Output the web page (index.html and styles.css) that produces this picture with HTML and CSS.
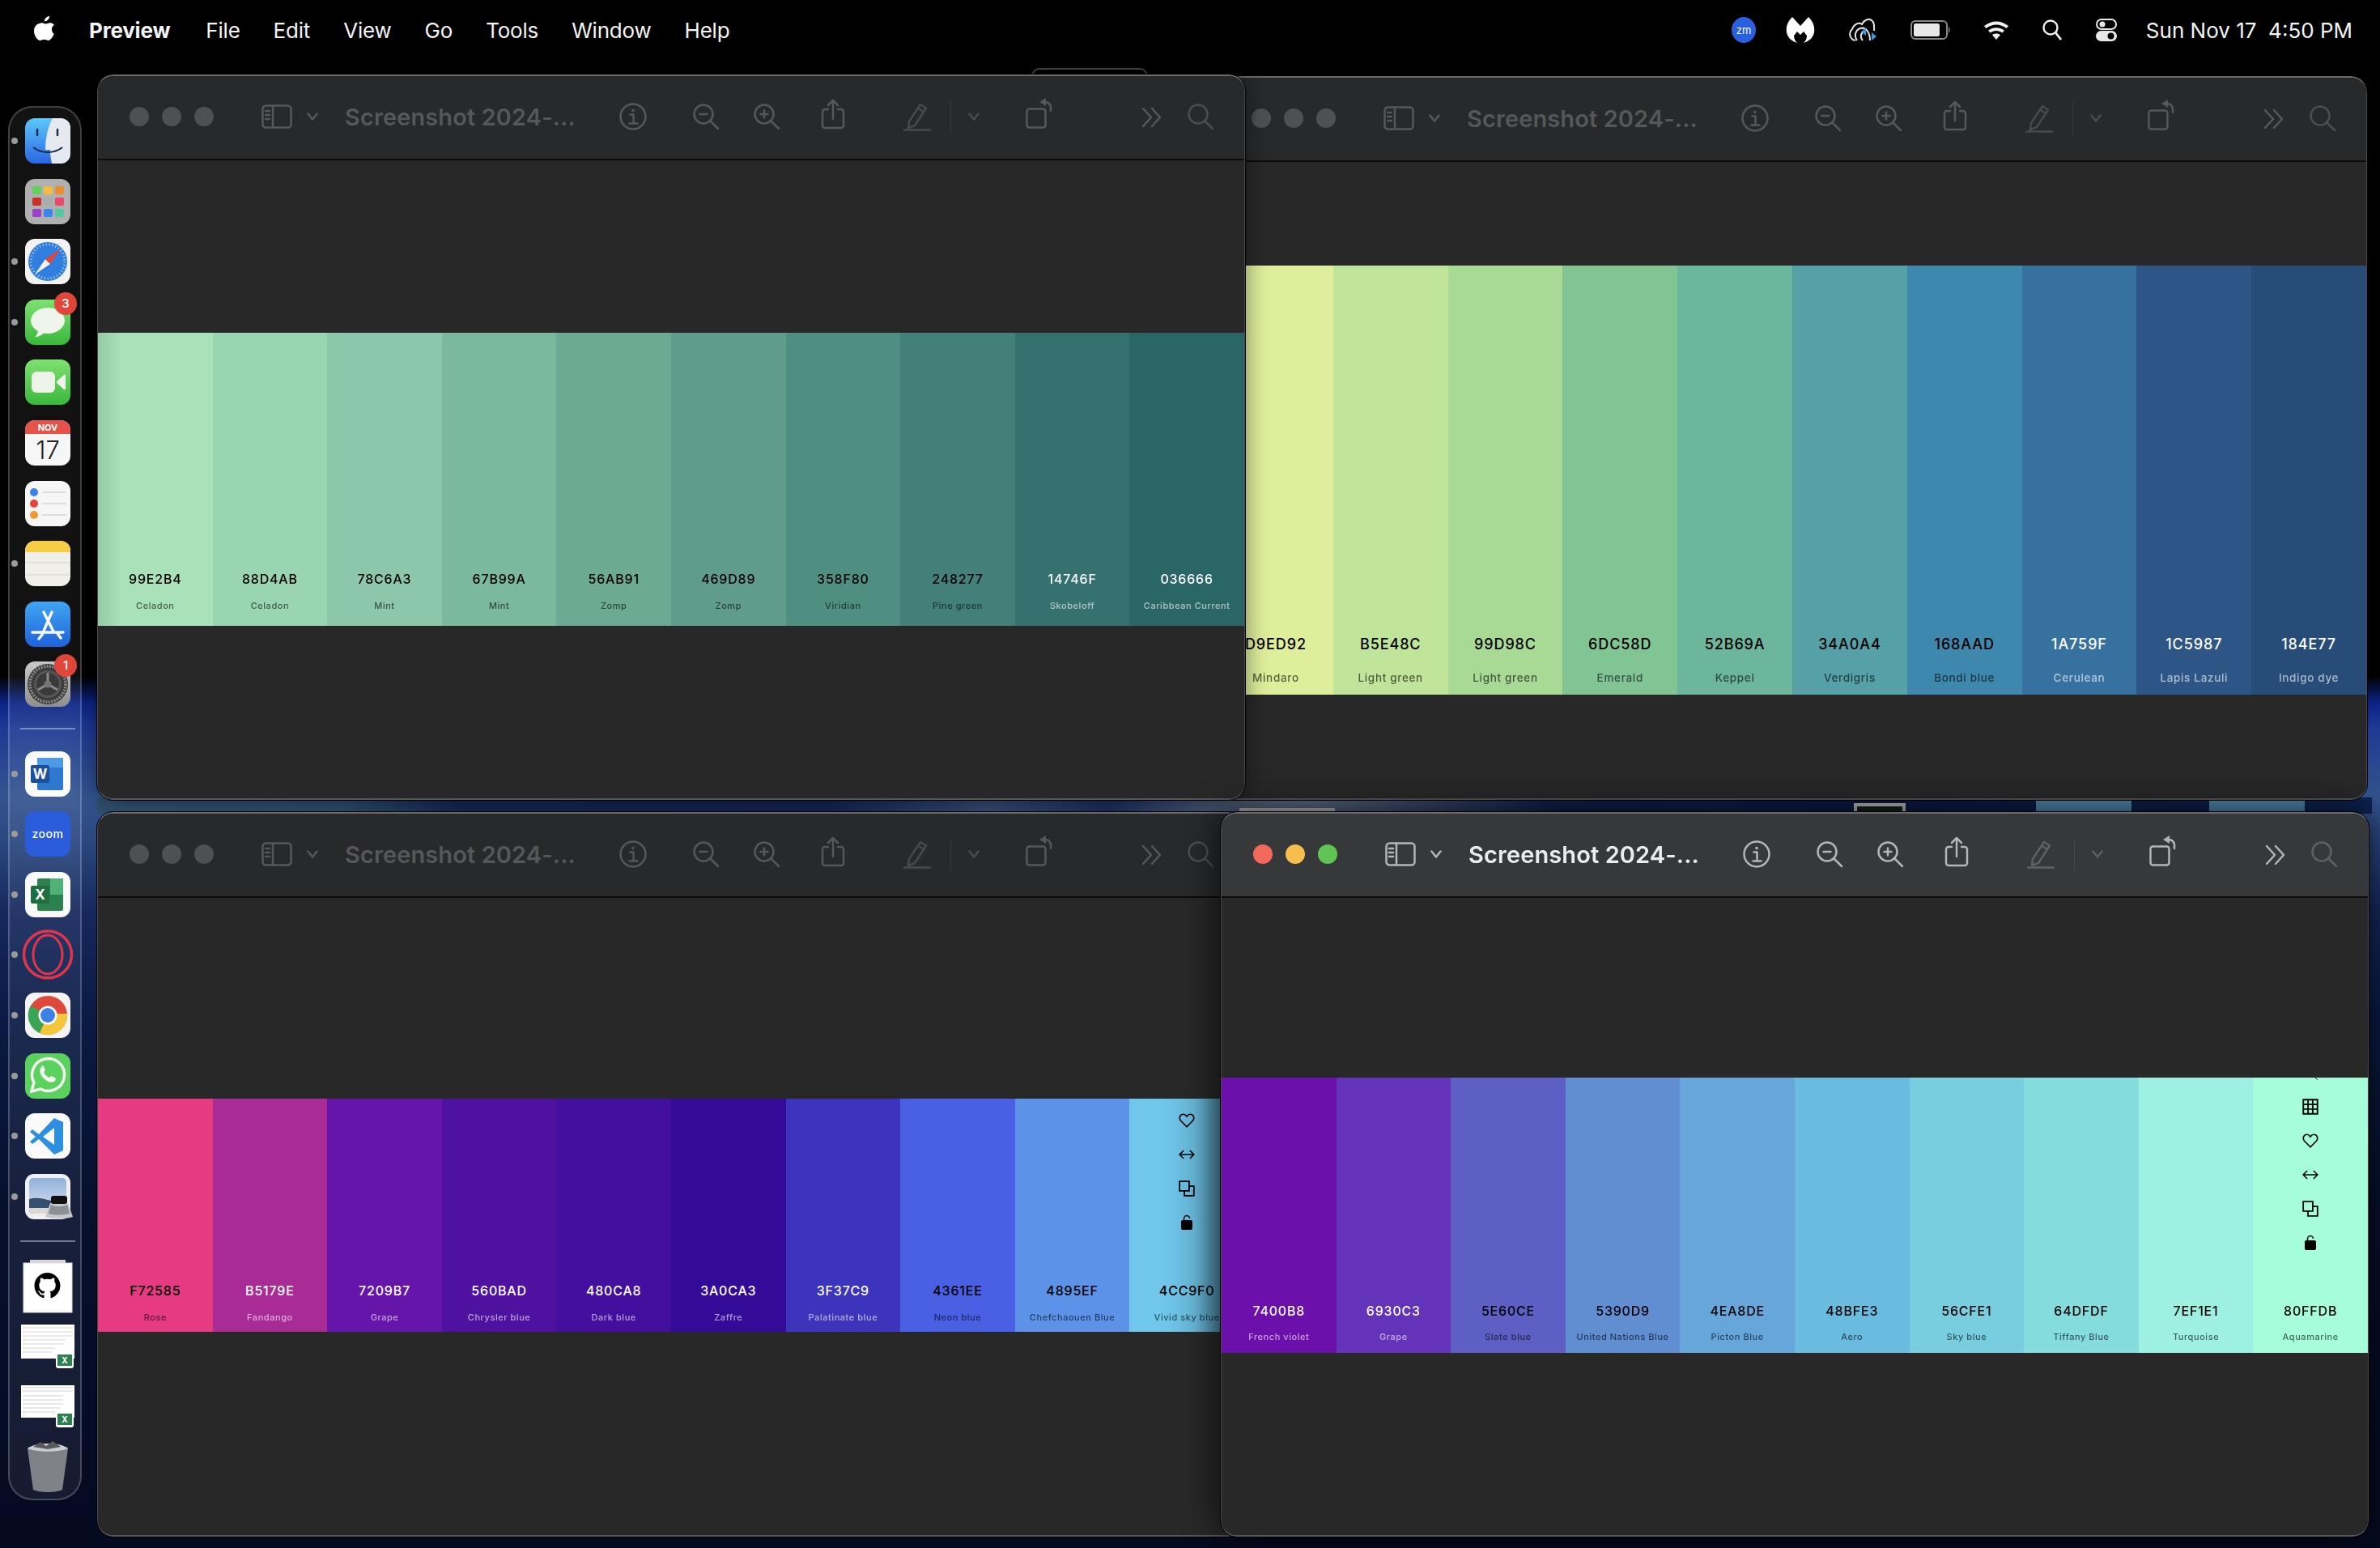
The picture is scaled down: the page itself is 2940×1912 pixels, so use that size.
FILE: index.html
```html
<!DOCTYPE html>
<html lang="en">
<head>
  <meta charset="UTF-8">
  <title>Preview - palettes</title>
  <link rel="stylesheet" href="styles.css">
</head>
<body>
  <!-- toolbar glyphs, shared by the four windows -->
  <svg class="defs" width="0" height="0">
    <symbol id="i-sidebar" viewBox="0 0 38 30"><rect x="1.5" y="1.5" width="35" height="27" rx="4"/><path d="M14 2v26M5 8h5M5 13h5M5 18h5"/></symbol>
    <symbol id="i-chev" viewBox="0 0 14 10"><path d="M1.5 1.5 7 8.5l5.500-7"/></symbol>
    <symbol id="i-info" viewBox="0 0 34 34"><circle cx="17" cy="17" r="15.500"/><path d="M13.500 14.500H17.500V25M12.500 25.500h10"/><circle class="fill" cx="17" cy="9.500" r="1.800"/></symbol>
    <symbol id="i-zoomout" viewBox="0 0 33 33"><circle cx="13" cy="13" r="11.500"/><path d="M21 21l10 10M8.500 13h9"/></symbol>
    <symbol id="i-zoomin" viewBox="0 0 33 33"><circle cx="13" cy="13" r="11.500"/><path d="M21 21l10 10M8.500 13h9M13 8.500v9"/></symbol>
    <symbol id="i-share" viewBox="0 0 30 38"><path d="M9 13H5a3 3 0 0 0-3 3v17a3 3 0 0 0 3 3h20a3 3 0 0 0 3-3V16a3 3 0 0 0-3-3h-4M15 25V2M9 8l6-6 6 6"/></symbol>
    <symbol id="i-pen" viewBox="0 0 34 36"><path d="M7 24 21 3l7 4.500L14 29l-8 3zM18 7.500l7 4.500M1 34.500h32"/></symbol>
    <symbol id="i-rotate" viewBox="0 0 34 38"><rect x="1.500" y="13.500" width="23" height="23" rx="3"/><path d="M24 5c4 0 7 3 7 7v4"/><path class="fill" d="M25 0l-8 5 8 5z"/></symbol>
    <symbol id="i-dchev" viewBox="0 0 24 24"><path d="M1 1l10 11L1 23M12 1l10 11-10 11"/></symbol>
    <symbol id="i-search" viewBox="0 0 33 33"><circle cx="13" cy="13" r="11.500"/><path d="M21 21l10 10"/></symbol>
    <symbol id="i-grid" viewBox="0 0 16 16"><path d="M1 1h14v14H1zM1 5.700h14M1 10.300h14M5.700 1v14M10.300 1v14"/></symbol>
    <symbol id="i-heart" viewBox="0 0 18 16"><path d="M9 15 2.500 8.500C-.5 5 2 1 5 1c2 0 3 1 4 2.500C10 2 11 1 13 1c3 0 5.500 4 2.500 7.500z"/></symbol>
    <symbol id="i-arrows" viewBox="0 0 18 12"><path d="M1 6h16M5.500 1.500 1 6l4.500 4.500M12.500 1.500 17 6l-4.500 4.500"/></symbol>
    <symbol id="i-copy" viewBox="0 0 17 17"><path d="M1 1h10v10H1zM11 6h5v10H6v-5"/></symbol>
    <symbol id="i-lock" viewBox="0 0 16 20"><path d="M4.500 7V5a3.500 3.500 0 0 1 7 0"/><rect class="fill" x="1" y="7" width="14" height="12" rx="2"/></symbol>
  </svg>

  <div class="desktop">
    <header class="menubar">
      <svg class="apple" viewBox="0 0 28 32"><path d="M20 1c.300 3-2.600 6.500-6 6.300C13.600 4 17 1.200 20 1zM23 17c0-3.300 2.700-4.900 3-5-1.700-2.400-4.200-2.800-5.100-2.800-2.200-.200-4.200 1.300-5.300 1.300s-2.800-1.300-4.600-1.300C6 9.300 1 12.500 1 19.500 1 25 5.300 31 8.500 31c1.700 0 2.900-1.200 5.100-1.200s3.200 1.200 5.100 1.200c3.100 0 6-5.300 7-8.200-.100 0-2.700-1.600-2.700-5.800z"/></svg>
      <nav class="menu">
        <span class="app-name">Preview</span>
        <span>File</span><span>Edit</span><span>View</span><span>Go</span><span>Tools</span><span>Window</span><span>Help</span>
      </nav>
      <div class="status">
        <svg class="st-zoom" viewBox="0 0 30 32"><ellipse cx="15" cy="16" rx="15" ry="16" fill="#2a5fe0"/><text x="15" y="21" text-anchor="middle" font-size="13" fill="#fff">zm</text></svg>
        <svg class="st-mb" viewBox="0 0 36 34"><path fill="#fff" d="M8 1C2 7 0 13 1 20c1 6 6 11 13 13-3-3-4-6-4-9l4-5 4 4 4-4 4 5c0 3-1 6-4 9 7-2 12-7 13-13 1-7-1-13-7-19l-10 11z"/></svg>
        <svg class="st-cc" viewBox="0 0 44 34"><g fill="none" stroke="#e6e6e6" stroke-width="2"><path d="M10 30a8 8 0 0 1-4-14c2-6 8-9 12-6 3-6 10-8 13-4 3 3 2 8 2 12M12 30c-4-6-2-13 4-15 7-2 12 5 12 15M19 30c-4-5-2-10 2-11"/></g><path fill="#3a9bd8" d="M23 14l-6 5 6 5zm7 6l6 5-6 5z"/></svg>
        <svg class="st-batt" viewBox="0 0 50 24"><rect x="1" y="1" width="44" height="22" rx="5" fill="none" stroke="#888" stroke-width="2"/><rect x="4" y="4" width="32" height="16" rx="2.500" fill="#e8e8e8"/><path fill="#888" d="M47 8c2 1 2 7 0 8z"/></svg>
        <svg class="st-wifi" viewBox="0 0 34 24"><path fill="#f0f0f0" d="M17 24l-5-6c3-2 7-2 10 0zM9.500 15.500 7 12.500c6-4.500 14-4.500 20 0l-2.500 3c-4.500-3.500-10.500-3.500-15 0zM4.500 10 2 7c9-7.500 21-7.500 30 0l-2.500 3C22 4 12 4 4.500 10z"/></svg>
        <svg class="st-search" viewBox="0 0 26 26"><circle cx="11" cy="10" r="8.500" fill="none" stroke="#f0f0f0" stroke-width="2.400"/><path d="M17 16l7 9" stroke="#f0f0f0" stroke-width="2.800"/></svg>
        <svg class="st-cc2" viewBox="0 0 26 28"><rect x="1" y="1" width="24" height="12" rx="6" fill="none" stroke="#e8e8e8" stroke-width="2"/><circle cx="8" cy="7" r="3.500" fill="#e8e8e8"/><rect y="15" width="26" height="13" rx="6.500" fill="#e8e8e8"/><circle cx="18.500" cy="21.500" r="4" fill="#000"/></svg>
        <span class="clock">Sun Nov 17&nbsp; 4:50 PM</span>
      </div>
    </header>

    <aside class="dock">
      <div class="dock-icon running">
        <svg viewBox="0 0 56 56"><defs><linearGradient id="fb" x1="0" y1="0" x2="0" y2="1"><stop offset="0" stop-color="#5cc8fa"/><stop offset="1" stop-color="#2a66e6"/></linearGradient></defs><rect width="56" height="56" rx="12" fill="url(#fb)"/><path d="M34 0h10a12 12 0 0 1 12 12v32a12 12 0 0 1-12 12H33c-1-5-2-11-2-17h-6c0-14 3-28 9-39z" fill="#e6eaf0"/><path d="M15 14v7M40 14v7" stroke="#1a2c46" stroke-width="2.500" stroke-linecap="round"/><path d="M10 36c10 8 26 8 36 0" fill="none" stroke="#1a2c46" stroke-width="2"/></svg>
      </div>
      <div class="dock-icon">
        <svg viewBox="0 0 56 56"><rect width="56" height="56" rx="12" fill="#b0b0b0"/><g><rect x="9" y="9" width="11" height="10" rx="2" fill="#62d05a"/><rect x="23" y="9" width="11" height="10" rx="2" fill="#f6bd3a"/><rect x="37" y="9" width="11" height="10" rx="2" fill="#ec8c30"/><rect x="9" y="23" width="11" height="10" rx="2" fill="#c9302a"/><rect x="23" y="23" width="11" height="10" rx="2" fill="#a9adb0"/><rect x="37" y="23" width="11" height="10" rx="2" fill="#e8486a"/><rect x="9" y="37" width="11" height="10" rx="2" fill="#9a40cc"/><rect x="23" y="37" width="11" height="10" rx="2" fill="#3a86f0"/><rect x="37" y="37" width="11" height="10" rx="2" fill="#52c8a0"/></g></svg>
      </div>
      <div class="dock-icon running">
        <svg viewBox="0 0 56 56"><rect width="56" height="56" rx="12" fill="#f2f2f2"/><circle cx="28" cy="28" r="24" fill="#2f7ee0"/><circle cx="28" cy="28" r="21" fill="none" stroke="#bcd8f6" stroke-width="3" stroke-dasharray="1 3"/><path d="M12 44 25 25l6 6z" fill="#f4f4f4"/><path d="M44 12 25 25l6 6z" fill="#e0453a"/></svg>
      </div>
      <div class="dock-icon running">
        <svg viewBox="0 0 56 56"><defs><linearGradient id="gb" x1="0" y1="0" x2="0" y2="1"><stop offset="0" stop-color="#7ee070"/><stop offset="1" stop-color="#3ab83c"/></linearGradient></defs><rect width="56" height="56" rx="12" fill="url(#gb)"/><ellipse cx="28" cy="26" rx="21" ry="16" fill="#eef5ea"/><path d="M16 36c0 4-1 8-4 10 5 0 9-2 12-6z" fill="#eef5ea"/></svg>
        <span class="badge">3</span>
      </div>
      <div class="dock-icon">
        <svg viewBox="0 0 56 56"><rect width="56" height="56" rx="12" fill="url(#gb)"/><rect x="8" y="15" width="29" height="26" rx="6" fill="#eef4ea"/><path d="M39 27l9-8c1-1 2 0 2 1v16c0 1-1 2-2 1l-9-8z" fill="#eef4ea"/></svg>
      </div>
      <div class="dock-icon">
        <svg viewBox="0 0 56 56"><rect width="56" height="56" rx="12" fill="#f6f6f6"/><path d="M0 17V12A12 12 0 0 1 12 0h32a12 12 0 0 1 12 12v5z" fill="#e5534b"/><text x="28" y="13" text-anchor="middle" class="cal-month">NOV</text><text x="28" y="48" text-anchor="middle" class="cal-day">17</text></svg>
      </div>
      <div class="dock-icon">
        <svg viewBox="0 0 56 56"><rect width="56" height="56" rx="12" fill="#f6f6f6"/><circle cx="11" cy="14" r="5" fill="#3b7ff0"/><circle cx="11" cy="28" r="5" fill="#e8433a"/><circle cx="11" cy="42" r="5" fill="#ee9a30"/><path d="M21 14h30M21 28h30M21 42h30" stroke="#d8d8d8" stroke-width="1.500"/></svg>
      </div>
      <div class="dock-icon running">
        <svg viewBox="0 0 56 56"><rect width="56" height="56" rx="12" fill="#f0efea"/><path d="M0 14V12A12 12 0 0 1 12 0h32a12 12 0 0 1 12 12v2z" fill="#f6cd45"/><path d="M0 27h56M0 42h56" stroke="#d4d2cc" stroke-width="1"/></svg>
      </div>
      <div class="dock-icon">
        <svg viewBox="0 0 56 56"><defs><linearGradient id="ab" x1="0" y1="0" x2="0" y2="1"><stop offset="0" stop-color="#3fa6f2"/><stop offset="1" stop-color="#1f62dc"/></linearGradient></defs><rect width="56" height="56" rx="12" fill="url(#ab)"/><path d="M9 38h38M21 41 33 13M23 13l12 24M39 38l5 7M21 41l-4 5" stroke="#f4f8fd" stroke-width="3.500" stroke-linecap="round" fill="none"/></svg>
      </div>
      <div class="dock-icon">
        <svg viewBox="0 0 56 56"><defs><linearGradient id="sb" x1="0" y1="0" x2="0" y2="1"><stop offset="0" stop-color="#c8c8c8"/><stop offset="1" stop-color="#8e8e8e"/></linearGradient></defs><rect width="56" height="56" rx="12" fill="url(#sb)"/><circle cx="28" cy="28" r="25" fill="#3c3c3c"/><circle cx="28" cy="28" r="22" fill="none" stroke="#8a8a8a" stroke-width="3.500" stroke-dasharray="2 1.500"/><circle cx="28" cy="28" r="17" fill="#565656"/><circle cx="28" cy="28" r="14" fill="#3a3a3a"/><path d="M28 28V14M28 28 16 35M28 28l12 7" stroke="#8c8c8c" stroke-width="3"/><circle cx="28" cy="28" r="4.500" fill="#757575"/></svg>
        <span class="badge">1</span>
      </div>
      <hr class="dock-sep">
      <div class="dock-icon running">
        <svg viewBox="0 0 56 56"><rect width="56" height="56" rx="12" fill="#fafafa"/><rect x="15" y="8" width="32" height="40" rx="2" fill="#2f78d0"/><rect x="15" y="8" width="32" height="12" fill="#4f9ae8"/><rect x="7" y="17" width="23" height="22" rx="2" fill="#1c4f9e"/><text x="18.500" y="34" text-anchor="middle" class="app-letter">W</text></svg>
      </div>
      <div class="dock-icon running">
        <svg viewBox="0 0 56 56"><rect width="56" height="56" rx="12" fill="#2a5cdc"/><text x="28" y="33" text-anchor="middle" class="zoom-word">zoom</text></svg>
      </div>
      <div class="dock-icon running">
        <svg viewBox="0 0 56 56"><rect width="56" height="56" rx="12" fill="#fafafa"/><rect x="15" y="8" width="32" height="40" rx="2" fill="#2d8050"/><rect x="31" y="8" width="16" height="20" fill="#4fb078"/><rect x="7" y="17" width="23" height="22" rx="2" fill="#1e6e42"/><text x="18.500" y="34" text-anchor="middle" class="app-letter">X</text></svg>
      </div>
      <div class="dock-icon running">
        <svg viewBox="0 0 56 56"><ellipse cx="28" cy="28" rx="29.500" ry="29" fill="none" stroke="#e0364c" stroke-width="3.500"/><ellipse cx="28" cy="28" rx="18" ry="24" fill="none" stroke="#e0364c" stroke-width="3"/></svg>
      </div>
      <div class="dock-icon running">
        <svg viewBox="0 0 56 56"><rect width="56" height="56" rx="12" fill="#f4f4f4"/><circle cx="28" cy="28" r="24" fill="#e0483c"/><path d="M28 28 7 16A24 24 0 0 0 18 50z" fill="#3aa655"/><path d="M28 28 18 50A24 24 0 0 0 52 26H28z" fill="#f6c63a"/><circle cx="28" cy="28" r="11.500" fill="#fff"/><circle cx="28" cy="28" r="9" fill="#3f7fe8"/></svg>
      </div>
      <div class="dock-icon running">
        <svg viewBox="0 0 56 56"><rect width="56" height="56" rx="12" fill="#5bd25e"/><path d="M8 47l3-11a20 20 0 1 1 8 8z" fill="none" stroke="#f4faf2" stroke-width="3.500"/><path d="M20 17c-3 3-2 9 3 14s11 6 14 3c1-2 1-3 0-4l-5-2-2 2c-3-1-6-4-7-7l2-2-2-5c-1-1-2-1-3 1z" fill="#f4faf2"/></svg>
      </div>
      <div class="dock-icon running">
        <svg viewBox="0 0 56 56"><rect width="56" height="56" rx="12" fill="#fafafa"/><path d="M36 6 17 26 9 20l-3 3 7 6-7 6 3 3 8-6 19 19 11-5V11z" fill="#2d8fe0"/><path d="M36 18v21L22 29z" fill="#fafafa"/></svg>
      </div>
      <div class="dock-icon running">
        <svg viewBox="0 0 56 56"><defs><linearGradient id="pv" x1="0" y1="0" x2="0" y2="1"><stop offset="0" stop-color="#8fb0dc"/><stop offset="1" stop-color="#dfe6f0"/></linearGradient></defs><rect width="56" height="56" rx="11" fill="#f0f0f2"/><rect x="5" y="5" width="46" height="44" rx="5" fill="url(#pv)"/><path d="M5 31c10-3 18 0 28 2v16H10a5 5 0 0 1-5-5z" fill="#34506e"/><path d="M5 42h28v7H10a5 5 0 0 1-5-5z" fill="#d8d8d4"/><path d="M31 36h22l6 17c-10 3-24 3-34 0z" fill="#c4c8cc"/><path d="M32 38c6 3 14 3 20 0l3 11c-8 2-18 2-26 0z" fill="#8a9096"/><rect x="32" y="27" width="20" height="10" rx="3" fill="#111"/></svg>
      </div>
      <hr class="dock-sep">
      <div class="dock-icon">
        <svg viewBox="0 0 56 56"><rect x="6" y="-4" width="44" height="4" fill="#d6d6d6"/><rect x="-2" y="0" width="60" height="61" fill="#fff" stroke="#ddd"/><path transform="translate(11.500 12) scale(2)" d="M8 0C3.580 0 0 3.580 0 8c0 3.540 2.290 6.530 5.470 7.590.4.070.55-.17.55-.38 0-.19-.01-.82-.01-1.490-2.010.37-2.530-.49-2.690-.94-.09-.23-.48-.94-.82-1.130-.28-.15-.68-.52-.01-.53.63-.01 1.080.58 1.230.82.72 1.210 1.870.87 2.330.66.070-.52.28-.87.51-1.070-1.780-.2-3.640-.89-3.640-3.950 0-.87.31-1.590.82-2.150-.08-.2-.36-1.020.08-2.120 0 0 .67-.21 2.200.82.64-.18 1.320-.27 2-.27s1.360.09 2 .27c1.530-1.040 2.200-.82 2.200-.82.44 1.100.16 1.920.08 2.120.51.56.82 1.270.82 2.150 0 3.070-1.870 3.750-3.650 3.950.29.25.54.73.54 1.480 0 1.070-.01 1.930-.01 2.200 0 .21.15.46.55.38A8 8 0 0 0 16 8c0-4.420-3.580-8-8-8z" fill="#000"/></svg>
      </div>
      <div class="dock-icon">
        <svg viewBox="0 0 56 56"><rect x="-5" y="2" width="66" height="42" fill="#fff"/><path d="M-3 6h62M-3 11h62M-3 16h62M-3 21h52M-3 26h50M-3 31h40M-3 36h36" stroke="#ccc" stroke-width=".8"/><rect x="38" y="36" width="22" height="20" rx="3" fill="#fff"/><rect x="40" y="39" width="18" height="14" fill="#2d8050"/><text x="49" y="50" text-anchor="middle" class="mini-x">X</text></svg>
      </div>
      <div class="dock-icon">
        <svg viewBox="0 0 56 56"><rect x="-5" y="2" width="66" height="40" fill="#fff"/><path d="M-3 5h62M-3 9h62M-3 15h50M-3 20h50M-3 25h50M-3 30h46M-3 35h40" stroke="#c4c4c4" stroke-width=".8"/><rect x="38" y="34" width="22" height="20" rx="3" fill="#fff"/><rect x="40" y="37" width="18" height="14" fill="#2d8050"/><text x="49" y="48" text-anchor="middle" class="mini-x">X</text></svg>
      </div>
      <div class="dock-icon">
        <svg viewBox="0 0 56 56"><path d="M3 5c10-8 40-8 50 0l-7 51c-8 4-28 4-36 0z" fill="#7f8286"/><path d="M3 5c10-8 40-8 50 0-10 5-40 5-50 0z" fill="#c9ccd0"/><path d="M10 3l9-6 7 5 8-6 10 7-16 3z" fill="#5a5a5a"/></svg>
      </div>
    </aside>

    <!-- bits of other windows and wallpaper showing between the four -->
    <div class="peek-top"></div>
    <div class="wall-strip"></div>
    <div class="peek peek-a"></div>
    <div class="peek peek-b"></div>
    <div class="peek peek-c"></div>
    <div class="peek peek-d"></div>

    <section class="win win-tr">
      <div class="titlebar">
        <i class="light"></i><i class="light"></i><i class="light"></i>
        <svg class="t-side"><use href="#i-sidebar"/></svg>
        <svg class="t-chev"><use href="#i-chev"/></svg>
        <span class="t-title">Screenshot 2024-...</span>
        <svg class="t-info"><use href="#i-info"/></svg>
        <svg class="t-zoomout"><use href="#i-zoomout"/></svg>
        <svg class="t-zoomin"><use href="#i-zoomin"/></svg>
        <svg class="t-share"><use href="#i-share"/></svg>
        <svg class="t-pen"><use href="#i-pen"/></svg>
        <span class="t-divider"></span>
        <svg class="t-chev2"><use href="#i-chev"/></svg>
        <svg class="t-rotate"><use href="#i-rotate"/></svg>
        <svg class="t-dchev"><use href="#i-dchev"/></svg>
        <svg class="t-search"><use href="#i-search"/></svg>
      </div>
      <div class="canvas">
        <div class="strip">
          <div class="swatch c-d9ed92"><b>D9ED92</b><small>Mindaro</small></div>
          <div class="swatch c-b5e48c"><b>B5E48C</b><small>Light green</small></div>
          <div class="swatch c-99d98c"><b>99D98C</b><small>Light green</small></div>
          <div class="swatch c-6dc58d"><b>6DC58D</b><small>Emerald</small></div>
          <div class="swatch c-52b69a"><b>52B69A</b><small>Keppel</small></div>
          <div class="swatch c-34a0a4"><b>34A0A4</b><small>Verdigris</small></div>
          <div class="swatch c-168aad"><b>168AAD</b><small>Bondi blue</small></div>
          <div class="swatch c-1a759f on-dark"><b>1A759F</b><small>Cerulean</small></div>
          <div class="swatch c-1c5987 on-dark"><b>1C5987</b><small>Lapis Lazuli</small></div>
          <div class="swatch c-184e77 on-dark"><b>184E77</b><small>Indigo dye</small></div>
        </div>
      </div>
    </section>

    <section class="win win-tl">
      <div class="titlebar">
        <i class="light"></i><i class="light"></i><i class="light"></i>
        <svg class="t-side"><use href="#i-sidebar"/></svg>
        <svg class="t-chev"><use href="#i-chev"/></svg>
        <span class="t-title">Screenshot 2024-...</span>
        <svg class="t-info"><use href="#i-info"/></svg>
        <svg class="t-zoomout"><use href="#i-zoomout"/></svg>
        <svg class="t-zoomin"><use href="#i-zoomin"/></svg>
        <svg class="t-share"><use href="#i-share"/></svg>
        <svg class="t-pen"><use href="#i-pen"/></svg>
        <span class="t-divider"></span>
        <svg class="t-chev2"><use href="#i-chev"/></svg>
        <svg class="t-rotate"><use href="#i-rotate"/></svg>
        <svg class="t-dchev"><use href="#i-dchev"/></svg>
        <svg class="t-search"><use href="#i-search"/></svg>
      </div>
      <div class="canvas">
        <div class="strip">
          <div class="swatch c-99e2b4"><b>99E2B4</b><small>Celadon</small></div>
          <div class="swatch c-88d4ab"><b>88D4AB</b><small>Celadon</small></div>
          <div class="swatch c-78c6a3"><b>78C6A3</b><small>Mint</small></div>
          <div class="swatch c-67b99a"><b>67B99A</b><small>Mint</small></div>
          <div class="swatch c-56ab91"><b>56AB91</b><small>Zomp</small></div>
          <div class="swatch c-469d89"><b>469D89</b><small>Zomp</small></div>
          <div class="swatch c-358f80"><b>358F80</b><small>Viridian</small></div>
          <div class="swatch c-248277"><b>248277</b><small>Pine green</small></div>
          <div class="swatch c-14746f on-dark"><b>14746F</b><small>Skobeloff</small></div>
          <div class="swatch c-036666 on-dark"><b>036666</b><small>Caribbean Current</small></div>
        </div>
      </div>
    </section>

    <section class="win win-bl">
      <div class="titlebar">
        <i class="light"></i><i class="light"></i><i class="light"></i>
        <svg class="t-side"><use href="#i-sidebar"/></svg>
        <svg class="t-chev"><use href="#i-chev"/></svg>
        <span class="t-title">Screenshot 2024-...</span>
        <svg class="t-info"><use href="#i-info"/></svg>
        <svg class="t-zoomout"><use href="#i-zoomout"/></svg>
        <svg class="t-zoomin"><use href="#i-zoomin"/></svg>
        <svg class="t-share"><use href="#i-share"/></svg>
        <svg class="t-pen"><use href="#i-pen"/></svg>
        <span class="t-divider"></span>
        <svg class="t-chev2"><use href="#i-chev"/></svg>
        <svg class="t-rotate"><use href="#i-rotate"/></svg>
        <svg class="t-dchev"><use href="#i-dchev"/></svg>
        <svg class="t-search"><use href="#i-search"/></svg>
      </div>
      <div class="canvas">
        <div class="strip">
          <div class="swatch c-f72585"><b>F72585</b><small>Rose</small></div>
          <div class="swatch c-b5179e on-dark"><b>B5179E</b><small>Fandango</small></div>
          <div class="swatch c-7209b7 on-dark"><b>7209B7</b><small>Grape</small></div>
          <div class="swatch c-560bad on-dark"><b>560BAD</b><small>Chrysler blue</small></div>
          <div class="swatch c-480ca8 on-dark"><b>480CA8</b><small>Dark blue</small></div>
          <div class="swatch c-3a0ca3 on-dark"><b>3A0CA3</b><small>Zaffre</small></div>
          <div class="swatch c-3f37c9 on-dark"><b>3F37C9</b><small>Palatinate blue</small></div>
          <div class="swatch c-4361ee"><b>4361EE</b><small>Neon blue</small></div>
          <div class="swatch c-4895ef"><b>4895EF</b><small>Chefchaouen Blue</small></div>
          <div class="swatch c-4cc9f0">
            <div class="tools">
              <svg><use href="#i-heart"/></svg>
              <svg><use href="#i-arrows"/></svg>
              <svg><use href="#i-copy"/></svg>
              <svg><use href="#i-lock"/></svg>
            </div>
            <b>4CC9F0</b><small>Vivid sky blue</small>
          </div>
        </div>
      </div>
    </section>

    <section class="win win-br active">
      <div class="titlebar">
        <i class="light red"></i><i class="light yellow"></i><i class="light green"></i>
        <svg class="t-side"><use href="#i-sidebar"/></svg>
        <svg class="t-chev"><use href="#i-chev"/></svg>
        <span class="t-title">Screenshot 2024-...</span>
        <svg class="t-info"><use href="#i-info"/></svg>
        <svg class="t-zoomout"><use href="#i-zoomout"/></svg>
        <svg class="t-zoomin"><use href="#i-zoomin"/></svg>
        <svg class="t-share"><use href="#i-share"/></svg>
        <svg class="t-pen"><use href="#i-pen"/></svg>
        <span class="t-divider"></span>
        <svg class="t-chev2"><use href="#i-chev"/></svg>
        <svg class="t-rotate"><use href="#i-rotate"/></svg>
        <svg class="t-dchev"><use href="#i-dchev"/></svg>
        <svg class="t-search"><use href="#i-search"/></svg>
      </div>
      <div class="canvas">
        <div class="strip">
          <div class="swatch c-7400b8 on-dark"><b>7400B8</b><small>French violet</small></div>
          <div class="swatch c-6930c3 on-dark"><b>6930C3</b><small>Grape</small></div>
          <div class="swatch c-5e60ce"><b>5E60CE</b><small>Slate blue</small></div>
          <div class="swatch c-5390d9"><b>5390D9</b><small>United Nations Blue</small></div>
          <div class="swatch c-4ea8de"><b>4EA8DE</b><small>Picton Blue</small></div>
          <div class="swatch c-48bfe3"><b>48BFE3</b><small>Aero</small></div>
          <div class="swatch c-56cfe1"><b>56CFE1</b><small>Sky blue</small></div>
          <div class="swatch c-64dfdf"><b>64DFDF</b><small>Tiffany Blue</small></div>
          <div class="swatch c-7ef1e1"><b>7EF1E1</b><small>Turquoise</small></div>
          <div class="swatch c-80ffdb">
            <div class="tools">
              <svg><use href="#i-search"/></svg>
              <svg><use href="#i-grid"/></svg>
              <svg><use href="#i-heart"/></svg>
              <svg><use href="#i-arrows"/></svg>
              <svg><use href="#i-copy"/></svg>
              <svg><use href="#i-lock"/></svg>
            </div>
            <b>80FFDB</b><small>Aquamarine</small>
          </div>
        </div>
      </div>
    </section>
  </div>
</body>
</html>
```

FILE: styles.css
```css
* { margin: 0; padding: 0; box-sizing: border-box; }
body {
  font-family: 'Inter', 'Noto Sans', sans-serif;
  background: #000;
  overflow: hidden;
}
.defs { position: absolute; }
svg { overflow: visible; display: block; }

.desktop {
  position: relative;
  width: 2940px;
  height: 1912px;
  overflow: hidden;
  background: linear-gradient(180deg, #000 0, #000 835px, #0c2386 868px, #1d3a94 900px, #34548f 985px, #2a477f 1040px, #15275c 1130px, #0a1a44 1260px, #060f2d 1500px, #040a20 1912px);
}

/* menu bar */
.menubar {
  display: flex;
  align-items: center;
  height: 74px;
  padding: 0 34px 0 41px;
  background: #000;
  color: #f4f4f4;
  font-size: 26px;
}
.apple { width: 28px; height: 32px; fill: #fff; margin-top: -4px; }
.menu { display: flex; margin-left: 41px; gap: 41px; letter-spacing: -0.2px; }
.app-name { font-weight: 700; margin-right: 3px; }
.status { display: flex; align-items: center; margin-left: auto; }
.st-zoom { width: 30px; height: 32px; }
.st-mb { width: 36px; height: 34px; margin-left: 37px; }
.st-cc { width: 44px; height: 34px; margin-left: 40px; }
.st-batt { width: 50px; height: 24px; margin-left: 34px; }
.st-wifi { width: 34px; height: 24px; margin-left: 39px; }
.st-search { width: 26px; height: 26px; margin-left: 39px; }
.st-cc2 { width: 26px; height: 28px; margin-left: 41px; }
.clock { margin-left: 36px; white-space: nowrap; }

/* dock */
.dock {
  position: absolute;
  left: 10px;
  top: 131px;
  width: 91px;
  height: 1722px;
  padding: 13px 0 0 7px;
  display: flex;
  flex-direction: column;
  align-items: center;
  gap: 18.6px;
  background: rgba(255,255,255,0.07);
  border: 2px solid rgba(255,255,255,0.2);
  border-radius: 30px;
}
.dock-icon { position: relative; width: 56px; height: 56px; flex: none; }
.dock-icon svg { width: 56px; height: 56px; }
.dock-icon.running::before {
  content: "";
  position: absolute;
  left: -17px;
  top: 24px;
  width: 8px;
  height: 8px;
  border-radius: 50%;
  background: #9a9a9a;
}
.dock-sep {
  width: 68px;
  height: 2px;
  margin: 7.5px 0;
  border: 0;
  flex: none;
  background: rgba(200,210,240,0.5);
}
.badge {
  position: absolute;
  top: -9px;
  right: -8px;
  width: 28px;
  height: 28px;
  border-radius: 50%;
  background: #e2453a;
  color: #fff;
  font-size: 15px;
  font-weight: 500;
  line-height: 28px;
  text-align: center;
}
.cal-month { font-size: 11px; font-weight: 700; fill: #fff; }
.cal-day { font-size: 31px; font-weight: 300; fill: #222; }
.app-letter { font-size: 17px; font-weight: 700; fill: #fff; }
.zoom-word { font-size: 14px; font-weight: 500; fill: #fff; letter-spacing: 0.5px; }
.mini-x { font-size: 10px; font-weight: 700; fill: #fff; }

/* what is left of the desktop between the windows */
.peek-top {
  position: absolute;
  left: 1274px;
  top: 84px;
  width: 144px;
  height: 20px;
  border: 2px solid #4a4a4a;
  border-radius: 10px 10px 0 0;
}
.wall-strip {
  position: absolute;
  left: 120px;
  top: 985px;
  width: 2810px;
  height: 20px;
  background: linear-gradient(90deg, #30506f 0, #2c4a6a 300px, #13264f 450px, #11234e 900px, #33496e 1100px, #1a2c57 1250px, #4c5d7a 1400px, #55657e 1500px, #0e1f4a 1800px, #0a1a44 2200px, #0d2250 2810px);
}
.peek { position: absolute; height: 18px; }
.peek-a { left: 1531px; top: 998px; width: 118px; background: #b0b0b0; }
.peek-b { left: 2290px; top: 992px; width: 64px; background: #14201c; border: 4px solid #b8b8b8; }
.peek-c { left: 2515px; top: 988px; width: 118px; background: #4f87ad; }
.peek-d { left: 2729px; top: 988px; width: 118px; background: #4f87ad; }

/* preview windows */
.win {
  position: absolute;
  display: flex;
  flex-direction: column;
  background: #282828;
  border: 1px solid #4a4a4c;
  border-top: 2px solid #6a6a6c;
  border-bottom: 2px solid #56565a;
  border-radius: 20px;
  outline: 1px solid #000;
  overflow: hidden;
  color: #56575a;
}
.win-tl { left: 120px; top: 92px; width: 1418px; height: 896px; }
.win-tr { left: 1504px; top: 94px; width: 1420px; height: 894px; }
.win-bl { left: 120px; top: 1003px; width: 1418px; height: 895px; }
.win-br { left: 1508px; top: 1003px; width: 1418px; height: 895px; }

.win-tl { filter: drop-shadow(0 0 14px rgba(0,0,0,0.45)); }
.win-br { filter: drop-shadow(0 0 22px rgba(0,0,0,0.75)); color: #b4b5b6; }

.titlebar {
  flex: none;
  display: flex;
  align-items: center;
  height: 104px;
  padding: 0 0 2px 39px;
  background: #28292b;
  border-bottom: 2px solid #0c0c0c;
}
.win-tr .titlebar { padding-left: 41px; }
.active .titlebar { background: #37383a; }
.titlebar svg { flex: none; fill: none; stroke: currentColor; stroke-width: 2.5; stroke-linecap: round; stroke-linejoin: round; }
.fill { fill: currentColor; stroke: none; }
.light { width: 24px; height: 24px; border-radius: 50%; background: #4f5052; margin-right: 16px; flex: none; }
.light.red { background: #f2695c; }
.light.yellow { background: #f6be4f; }
.light.green { background: #61c354; }
.t-side { width: 38px; height: 30px; margin-left: 43px; }
.t-chev { width: 14px; height: 10px; margin-left: 18px; }
.t-title { width: 300px; margin-left: 33px; font-size: 29px; font-weight: 600; white-space: nowrap; letter-spacing: 0.1px; }
.active .t-title { color: #ececec; }
.t-info { width: 34px; height: 34px; margin-left: 39px; }
.t-zoomout { width: 33px; height: 33px; margin-left: 57px; }
.t-zoomin { width: 33px; height: 33px; margin-left: 42px; }
.t-share { width: 30px; height: 38px; margin-left: 50px; margin-top: -6px; }
.t-pen { width: 34px; height: 36px; margin-left: 72px; opacity: 0.7; }
.active .t-pen, .active .t-chev2, .active .t-search { color: #5f6062; opacity: 1; }
.t-divider { width: 1px; height: 40px; margin-left: 24px; background: rgba(255,255,255,0.08); flex: none; }
.t-chev2 { width: 14px; height: 10px; margin-left: 21px; opacity: 0.75; }
.t-rotate { width: 34px; height: 38px; margin-left: 57px; margin-top: -8px; }
.t-dchev { width: 24px; height: 24px; margin-left: 110px; margin-top: 2px; }
.t-search { width: 33px; height: 33px; margin-left: 32px; opacity: 0.8; }

/* palette image */
.canvas { flex: 1; display: flex; align-items: center; background: #282828; min-height: 0; }
.win-bl .canvas, .win-br .canvas { padding-bottom: 3px; }
.strip { width: 100%; display: flex; }
.win-tl .strip { height: 362px; --hex: 16px; --name: 11px; --sp: 19px; --pb: 18px; }
.win-tr .strip { height: 530px; --hex: 18px; --name: 13.5px; --sp: 24px; --pb: 13px; }
.win-bl .strip { height: 288px; --hex: 16px; --name: 11px; --sp: 19px; --pb: 11px; }
.win-br .strip { height: 340px; --hex: 16px; --name: 11px; --sp: 18px; --pb: 13px; }
.swatch {
  flex: 1 1 0;
  min-width: 0;
  overflow: hidden;
  display: flex;
  flex-direction: column;
  justify-content: flex-end;
  align-items: center;
  padding-bottom: var(--pb);
  color: #000;
}
.swatch b { font-size: var(--hex); font-weight: 500; letter-spacing: 0.05em; line-height: 1; }
.swatch small { font-size: var(--name); font-weight: 500; letter-spacing: 0.05em; line-height: 1.2; margin-top: var(--sp); opacity: 0.6; white-space: nowrap; }
.swatch.on-dark { color: #fff; }
.tools { display: flex; flex-direction: column; align-items: center; gap: 22px; margin-bottom: 66px; flex: none; }
.tools svg { width: 20px; height: 20px; fill: none; stroke: #000; stroke-width: 1.500; }
.tools .fill { fill: #000; }

.c-99e2b4 { background: linear-gradient(90deg, #96caa4, #a9e2b9 30px); }
.c-88d4ab { background: #9ad5b1; }
.c-78c6a3 { background: #8bc7a8; }
.c-67b99a { background: #7bb99f; }
.c-56ab91 { background: #6caa93; }
.c-469d89 { background: #5f9c8b; }
.c-358f80 { background: #4f8f82; }
.c-248277 { background: #43807a; }
.c-14746f { background: #34716f; }
.c-036666 { background: #2b6667; }

.c-d9ed92 { background: #dfee9b; }
.c-b5e48c { background: #c0e59a; }
.c-99d98c { background: #a8da96; }
.c-6dc58d { background: #82c595; }
.c-52b69a { background: #6db69e; }
.c-34a0a4 { background: #56a0a7; }
.c-168aad { background: #3f88ad; }
.c-1a759f { background: #37719f; }
.c-1c5987 { background: #2d5686; }
.c-184e77 { background: #264c77; }

.c-f72585 { background: #e63a82; }
.c-b5179e { background: #a92c96; }
.c-7209b7 { background: #6515a9; }
.c-560bad { background: #4f12a0; }
.c-480ca8 { background: #420f9e; }
.c-3a0ca3 { background: #340b98; }
.c-3f37c9 { background: #3c34bd; }
.c-4361ee { background: #495fe4; }
.c-4895ef { background: #5c93e8; }
.c-4cc9f0 { background: linear-gradient(90deg, #70c7ec 0, #70c7ec 40px, #66b6d6 80px, #4c88a6 113px, #4c88a6 100%); }

.c-7400b8 { background: #6c10ab; }
.c-6930c3 { background: #6334b9; }
.c-5e60ce { background: #5e5fc4; }
.c-5390d9 { background: #618ed1; }
.c-4ea8de { background: #67a6da; }
.c-48bfe3 { background: #6abbe0; }
.c-56cfe1 { background: #78cddf; }
.c-64dfdf { background: #84dcdc; }
.c-7ef1e1 { background: #9df0e2; }
.c-80ffdb { background: #a5fddb; }
```
